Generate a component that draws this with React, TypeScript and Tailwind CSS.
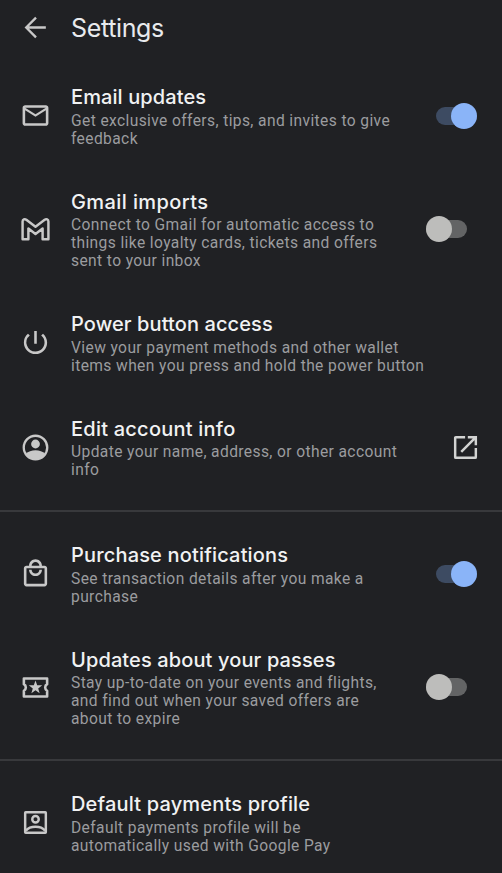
import type { ReactNode } from "react";
import clsx from "clsx";
import { MdMailOutline, MdOutlineLocalMall, MdPowerSettingsNew } from "react-icons/md";

interface SettingRow {
  title: string;
  titleClass: string;
  lines: string[];
  icon: ReactNode;
  action?: ReactNode;
}

function ArrowIcon() {
  return (
    <svg viewBox="0 0 24 24" className="size-[31px]" fill="none" stroke="currentColor" strokeWidth="1.8">
      <path d="M20 12H5M12.4 4.4 4.8 12l7.6 7.6" />
    </svg>
  );
}

function GmailIcon() {
  return (
    <svg viewBox="0 0 24 24" className="size-[31px]" fill="none" stroke="currentColor" strokeWidth="1.9" strokeLinejoin="round">
      <path d="M2 5.8c0-1.6 1.6-2.2 2.9-1.3L12 9.8l7.1-5.3C20.4 3.6 22 4.2 22 5.8v13.7h-4.5v-8.2L12 15.5l-5.5-4.2v8.2H2z" />
    </svg>
  );
}

function AccountIcon() {
  return (
    <svg viewBox="0 0 24 24" className="size-[31px]">
      <circle cx="12" cy="12" r="9.1" fill="none" stroke="currentColor" strokeWidth="1.8" />
      <circle cx="12" cy="9.3" r="3.4" fill="currentColor" />
      <path d="M4.6 17c1.7-1.8 4.4-2.8 7.4-2.8s5.7 1 7.4 2.8A9 9 0 0 1 12 21a9 9 0 0 1-7.4-4z" fill="currentColor" />
    </svg>
  );
}

function TicketIcon() {
  return (
    <svg viewBox="0 0 24 24" className="size-[31px]" fill="none" stroke="currentColor" strokeWidth="2" strokeLinejoin="round">
      <path d="M3 5h18v4.4a3 3 0 0 0 0 5.2V19H3v-4.4a3 3 0 0 0 0-5.2z" />
      <path
        d="m12 6.6 1.3 3.6 3.9.1-3.1 2.4 1.1 3.7L12 14.2l-3.2 2.2 1.1-3.7-3.1-2.4 3.9-.1z"
        fill="currentColor"
        stroke="none"
      />
    </svg>
  );
}

function ProfileIcon() {
  return (
    <svg viewBox="0 0 24 24" className="size-[31px]" fill="none" stroke="currentColor" strokeWidth="1.9" strokeLinejoin="round">
      <rect x="4" y="4" width="16" height="16" rx=".4" />
      <circle cx="12" cy="9.5" r="2.5" />
      <path d="M4.5 18.3c1.7-2 4.4-3 7.5-3s5.8 1 7.5 3" />
    </svg>
  );
}

function OpenIcon() {
  return (
    <svg viewBox="0 0 24 24" className="size-[31px]" fill="none" stroke="currentColor" strokeWidth="1.9">
      <path d="M11.7 4H4.5a.5.5 0 0 0-.5.5v15a.5.5 0 0 0 .5.5h15a.5.5 0 0 0 .5-.5v-7.2" />
      <path d="M13.8 4H20v6.2M20 4 8.7 15.3" />
    </svg>
  );
}

function Toggle({ on = false }: { on?: boolean }) {
  return (
    <div className={clsx("flex h-[26px] w-[41px] items-center", on ? "mr-[4.5px]" : "mr-[14.5px]")}>
      <div className={clsx("flex h-[18px] w-full items-center rounded-full", on ? "justify-end bg-[#3d4b62]" : "bg-[#636465]")}>
        <div className={clsx("size-[26px] shrink-0 rounded-full", on ? "bg-[#8ab4f8]" : "bg-[#bdbdbb]")} />
      </div>
    </div>
  );
}

const sections: SettingRow[][] = [
  [
    {
      title: "Email updates",
      titleClass: "tracking-[0.1px]",
      lines: ["Get exclusive offers, tips, and invites to give", "feedback"],
      icon: <MdMailOutline className="size-[31px]" />,
      action: <Toggle on />,
    },
    {
      title: "Gmail imports",
      titleClass: "tracking-[0.4px]",
      lines: ["Connect to Gmail for automatic access to", "things like loyalty cards, tickets and offers", "sent to your inbox"],
      icon: <GmailIcon />,
      action: <Toggle />,
    },
    {
      title: "Power button access",
      titleClass: "tracking-[0.1px]",
      lines: ["View your payment methods and other wallet", "items when you press and hold the power button"],
      icon: <MdPowerSettingsNew className="size-[31px]" />,
    },
    {
      title: "Edit account info",
      titleClass: "tracking-[0.23px]",
      lines: ["Update your name, address, or other account", "info"],
      icon: <AccountIcon />,
      action: <OpenIcon />,
    },
  ],
  [
    {
      title: "Purchase notifications",
      titleClass: "tracking-[0.17px]",
      lines: ["See transaction details after you make a", "purchase"],
      icon: <MdOutlineLocalMall className="size-[31px]" />,
      action: <Toggle on />,
    },
    {
      title: "Updates about your passes",
      titleClass: "tracking-[0.12px]",
      lines: ["Stay up-to-date on your events and flights,", "and find out when your saved offers are", "about to expire"],
      icon: <TicketIcon />,
      action: <Toggle />,
    },
  ],
  [
    {
      title: "Default payments profile",
      titleClass: "tracking-[0.18px]",
      lines: ["Default payments profile will be", "automatically used with Google Pay"],
      icon: <ProfileIcon />,
    },
  ],
];

function Row({ row }: { row: SettingRow }) {
  return (
    <div className={clsx("flex items-center pt-px pr-[21px] pl-5", row.lines.length === 3 ? "h-[122.5px]" : "h-[104.5px]")}>
      <div className="w-[51px] shrink-0 text-[#c8c8c8]">{row.icon}</div>
      <div className="flex-1 pt-px whitespace-nowrap">
        <h2 className={clsx("pb-[2.5px] font-['Inter',sans-serif] text-[20px] leading-6 font-medium text-[#f1f2f3]", row.titleClass)}>{row.title}</h2>
        <p className="text-[15.6px] leading-[18px] tracking-[0.38px] text-[#9b9c9f]">
          {row.lines.map((line) => (
            <span key={line} className="block">{line}</span>
          ))}
        </p>
      </div>
      <div className="shrink-0 text-[#d2d3d2]">{row.action}</div>
    </div>
  );
}

export default function App() {
  return (
    <div className="h-[873px] w-[502px] overflow-hidden bg-[#202124] font-['Roboto',sans-serif]">
      <header className="flex h-[63px] items-start pl-5">
        <div className="w-[51px] pt-3 text-[#c8c8c8]">
          <ArrowIcon />
        </div>
        <h1 className="pt-3 font-['Inter',sans-serif] text-[25px] leading-8 tracking-[-0.35px] text-[#e8eaed]">Settings</h1>
      </header>
      {sections.map((rows, i) => (
        <section key={i} className={clsx(i > 0 && "mt-[11px] border-t-2 border-[#38393c] pt-[9px]")}>
          {rows.map((row) => (
            <Row key={row.title} row={row} />
          ))}
        </section>
      ))}
    </div>
  );
}
